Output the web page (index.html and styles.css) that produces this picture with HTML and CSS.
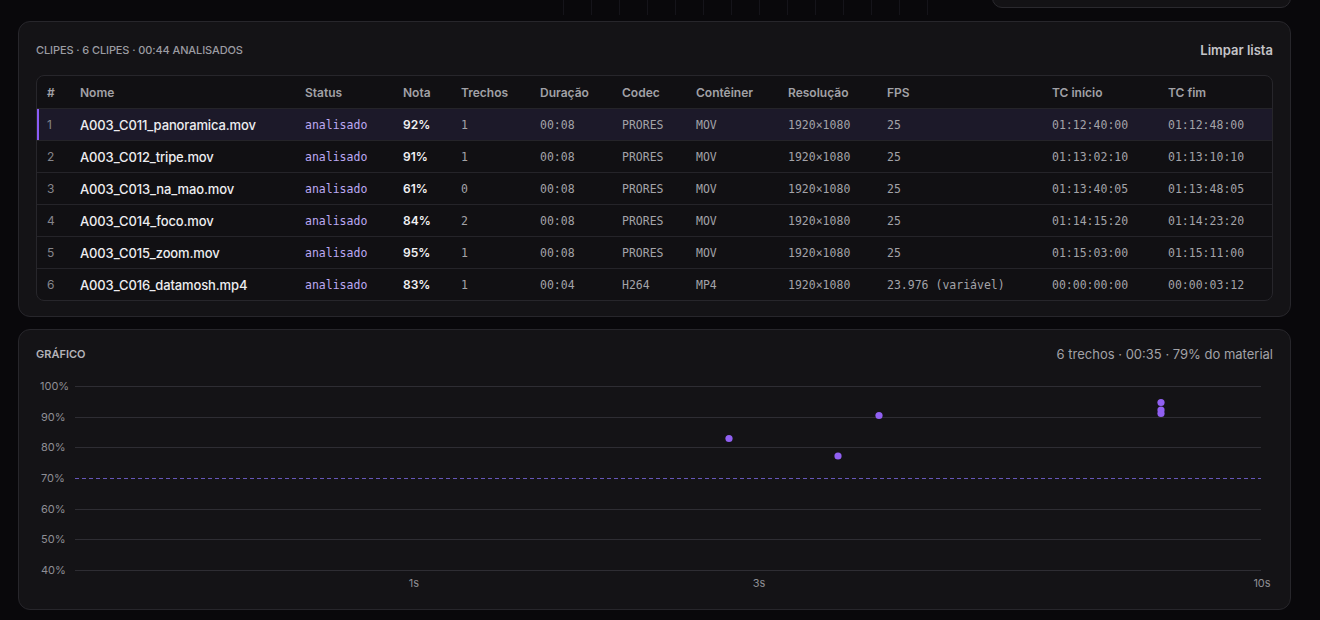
FILE: index.html
```html
<!DOCTYPE html>
<html>
<head>
	<title>Clipes</title>
	<link rel="stylesheet" href="styles.css">
</head>
<body>
	<div class="top-strip">
		<div class="ticks"></div>
		<div class="panel-stub"></div>
	</div>

	<section class="card clips-card">
		<div class="card-head">
			<span class="label">Clipes · 6 clipes · 00:44 analisados</span>
			<button class="link-btn">Limpar lista</button>
		</div>
		<div class="table-wrap">
			<table class="clips">
				<colgroup>
					<col style="width:33px"><col style="width:225px"><col style="width:98px"><col style="width:58px">
					<col style="width:79px"><col style="width:82px"><col style="width:74px"><col style="width:92px">
					<col style="width:99px"><col style="width:165px"><col style="width:116px"><col>
				</colgroup>
				<thead>
					<tr>
						<th>#</th><th>Nome</th><th>Status</th><th>Nota</th><th>Trechos</th><th>Duração</th>
						<th>Codec</th><th>Contêiner</th><th>Resolução</th><th>FPS</th><th>TC início</th><th>TC fim</th>
					</tr>
				</thead>
				<tbody>
					<tr class="selected">
						<td class="idx">1</td><td class="name">A003_C011_panoramica.mov</td><td class="status">analisado</td><td class="score">92%</td>
						<td class="mono">1</td><td class="mono">00:08</td><td class="mono">PRORES</td><td class="mono">MOV</td>
						<td class="mono">1920×1080</td><td class="mono">25</td><td class="mono">01:12:40:00</td><td class="mono">01:12:48:00</td>
					</tr>
					<tr>
						<td class="idx">2</td><td class="name">A003_C012_tripe.mov</td><td class="status">analisado</td><td class="score">91%</td>
						<td class="mono">1</td><td class="mono">00:08</td><td class="mono">PRORES</td><td class="mono">MOV</td>
						<td class="mono">1920×1080</td><td class="mono">25</td><td class="mono">01:13:02:10</td><td class="mono">01:13:10:10</td>
					</tr>
					<tr>
						<td class="idx">3</td><td class="name">A003_C013_na_mao.mov</td><td class="status">analisado</td><td class="score">61%</td>
						<td class="mono">0</td><td class="mono">00:08</td><td class="mono">PRORES</td><td class="mono">MOV</td>
						<td class="mono">1920×1080</td><td class="mono">25</td><td class="mono">01:13:40:05</td><td class="mono">01:13:48:05</td>
					</tr>
					<tr>
						<td class="idx">4</td><td class="name">A003_C014_foco.mov</td><td class="status">analisado</td><td class="score">84%</td>
						<td class="mono">2</td><td class="mono">00:08</td><td class="mono">PRORES</td><td class="mono">MOV</td>
						<td class="mono">1920×1080</td><td class="mono">25</td><td class="mono">01:14:15:20</td><td class="mono">01:14:23:20</td>
					</tr>
					<tr>
						<td class="idx">5</td><td class="name">A003_C015_zoom.mov</td><td class="status">analisado</td><td class="score">95%</td>
						<td class="mono">1</td><td class="mono">00:08</td><td class="mono">PRORES</td><td class="mono">MOV</td>
						<td class="mono">1920×1080</td><td class="mono">25</td><td class="mono">01:15:03:00</td><td class="mono">01:15:11:00</td>
					</tr>
					<tr>
						<td class="idx">6</td><td class="name">A003_C016_datamosh.mp4</td><td class="status">analisado</td><td class="score">83%</td>
						<td class="mono">1</td><td class="mono">00:04</td><td class="mono">H264</td><td class="mono">MP4</td>
						<td class="mono">1920×1080</td><td class="mono">23.976 (variável)</td><td class="mono">00:00:00:00</td><td class="mono">00:00:03:12</td>
					</tr>
				</tbody>
			</table>
		</div>
	</section>

	<section class="card chart-card">
		<div class="card-head">
			<span class="label label-light">Gráfico</span>
			<span class="summary">6 trechos · 00:35 · 79% do material</span>
		</div>
		<svg class="chart" width="1236" height="223" viewBox="0 0 1236 223">
			<!-- grid -->
			<g class="grid">
				<line x1="39" y1="14.5" x2="1225" y2="14.5"/>
				<line x1="39" y1="45.5" x2="1225" y2="45.5"/>
				<line x1="39" y1="75.5" x2="1225" y2="75.5"/>
				<line x1="39" y1="137.5" x2="1225" y2="137.5"/>
				<line x1="39" y1="167.5" x2="1225" y2="167.5"/>
				<line x1="39" y1="198.5" x2="1225" y2="198.5"/>
			</g>
			<line class="threshold" x1="39" y1="106.5" x2="1225" y2="106.5"/>
			<g class="ylabels">
				<text x="4" y="18">100%</text>
				<text x="5" y="49">90%</text>
				<text x="5" y="79">80%</text>
				<text x="5" y="110">70%</text>
				<text x="5" y="141">60%</text>
				<text x="5" y="171">50%</text>
				<text x="5" y="202">40%</text>
			</g>
			<g class="xlabels">
				<text x="378" y="215">1s</text>
				<text x="723" y="215">3s</text>
				<text x="1226" y="215">10s</text>
			</g>
			<!-- clips -->
			<g class="dots">
				<circle cx="693" cy="66.5" r="3.6"/>
				<circle cx="802" cy="84" r="3.6"/>
				<circle cx="843" cy="43.5" r="3.6"/>
				<circle cx="1125" cy="30.5" r="3.6"/>
				<circle cx="1125" cy="38" r="3.6"/>
				<circle cx="1125" cy="41.5" r="3.6"/>
			</g>
		</svg>
	</section>
</body>
</html>
```

FILE: styles.css
```css
body {
	margin: 0;
	padding: 0 29px 10px 18px;
	background: #09080b;
	font-family: Inter, "Noto Sans", sans-serif;
	color: #e6e6e9;
}

.top-strip {
	height: 8px;
	display: flex;
	align-items: flex-start;
}

.ticks {
	margin-left: 545px;
	width: 380px;
	height: 15px;
	background: repeating-linear-gradient(to right, #15141a 0 1px, transparent 1px 28px);
}

.panel-stub {
	margin-left: auto;
	margin-top: -30px;
	width: 299px;
	height: 38px;
	background: #131215;
	border: 1px solid #2a292e;
	border-radius: 10px;
	box-sizing: border-box;
}

.card {
	background: #141316;
	border: 1px solid #27262b;
	border-radius: 12px;
	padding: 14px 17px 15px;
}

.clips-card {
	margin-top: 13px;
}

.chart-card {
	margin-top: 12px;
	padding-bottom: 14px;
}

.card-head {
	display: flex;
	justify-content: space-between;
	align-items: center;
	height: 28px;
	margin-bottom: 11px;
}

.chart-card .card-head {
	height: 20px;
	margin-bottom: 8px;
}

.label {
	font-size: 11px;
	font-weight: 500;
	text-transform: uppercase;
	letter-spacing: -0.01em;
	color: #9c9ca2;
}

.label-light {
	font-weight: 600;
	letter-spacing: 0;
	color: #b4b4b9;
}

.link-btn {
	background: none;
	border: 0;
	padding: 0;
	font-family: inherit;
	font-size: 13px;
	font-weight: 600;
	color: #c4c4c8;
	cursor: pointer;
}

.summary {
	font-size: 13px;
	color: #a2a2a7;
}

.table-wrap {
	border: 1px solid #27262b;
	border-radius: 8px;
	overflow: hidden;
	background: #111013;
}

.clips {
	width: 100%;
	border-collapse: collapse;
	table-layout: fixed;
}

.clips th {
	height: 32px;
	padding: 0 0 0 10px;
	text-align: left;
	font-size: 12px;
	font-weight: 600;
	color: #a1a1a6;
}

.clips td {
	height: 31px;
	padding: 0 0 0 10px;
	border-top: 1px solid #252429;
	white-space: nowrap;
}

.clips tr.selected td {
	background: #1c1929;
}

.clips tr.selected td.idx {
	box-shadow: inset 2px 0 0 #8b5cf6;
}

.idx {
	font-size: 12px;
	color: #85858b;
}

.name {
	font-size: 13px;
	font-weight: 500;
	letter-spacing: -0.01em;
	color: #ededf0;
}

.status {
	font-family: "DejaVu Sans Mono", "Liberation Mono", monospace;
	font-size: 11.5px;
	color: #bca9f2;
}

.score {
	font-size: 12px;
	font-weight: 600;
	color: #f1f1f3;
}

.mono {
	font-family: "DejaVu Sans Mono", "Liberation Mono", monospace;
	font-size: 11.5px;
	color: #a3a3a8;
}

.chart {
	display: block;
}

.grid line {
	stroke: #2e2d33;
	stroke-width: 1;
}

.threshold {
	stroke: #6656b8;
	stroke-width: 1;
	stroke-dasharray: 4 3;
}

.ylabels text,
.xlabels text {
	font-family: Inter, "Noto Sans", sans-serif;
	font-size: 11px;
	fill: #8e8e94;
}

.xlabels text {
	text-anchor: middle;
}

.dots circle {
	fill: #9160f2;
}
```
